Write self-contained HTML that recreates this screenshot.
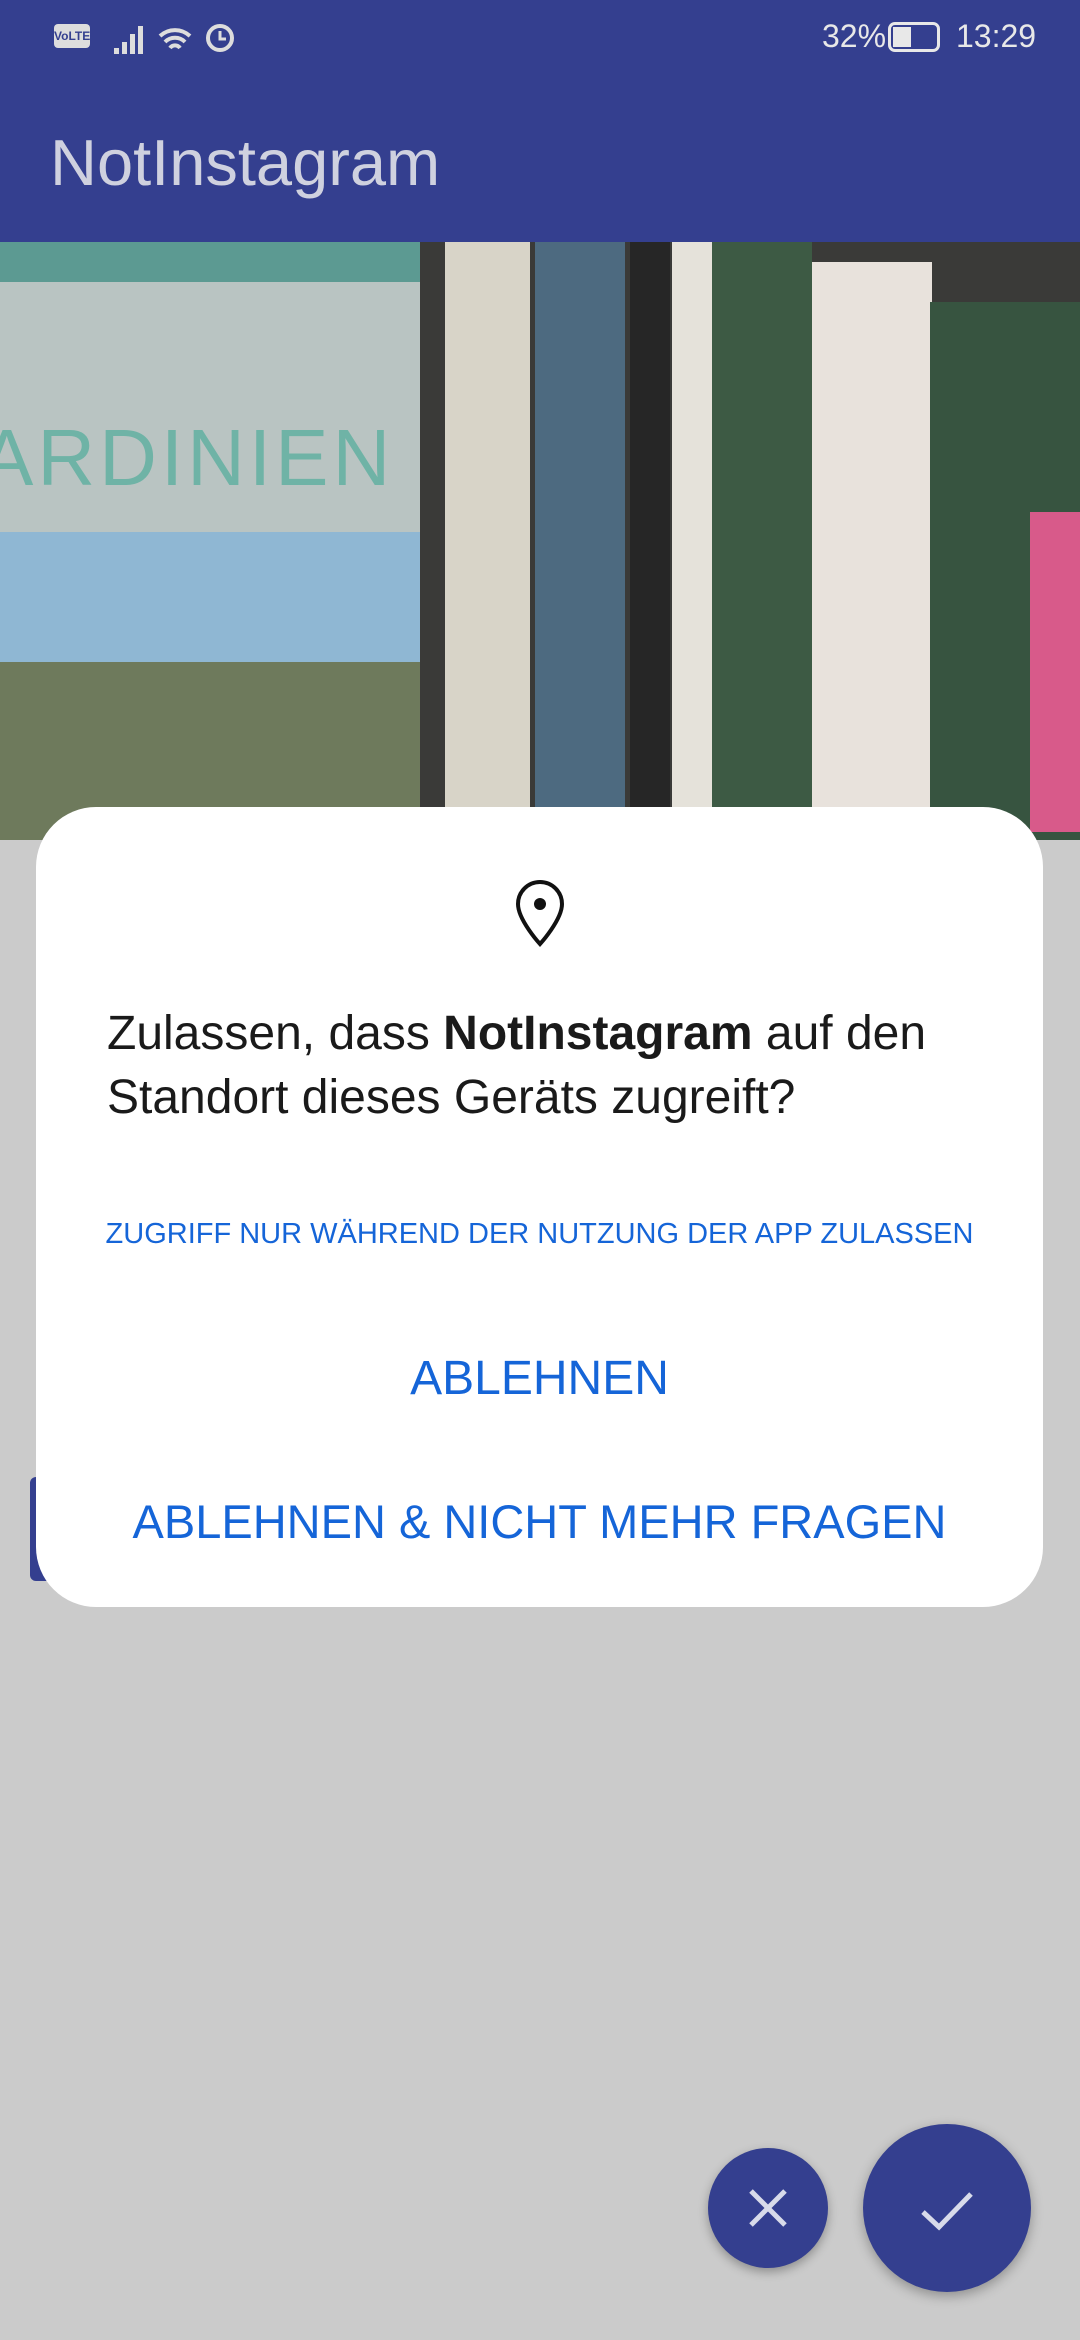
<!DOCTYPE html>
<html><head><meta charset="utf-8"><style>
*{margin:0;padding:0;box-sizing:border-box}
body{width:1080px;height:2340px;background:#cbcbcb;position:relative;overflow:hidden;font-family:"Liberation Sans",sans-serif}
.abs{position:absolute}
</style></head><body>
<div class="abs" style="left:0;top:0;width:1080px;height:242px;background:#343f8f"></div>
<div class="abs" style="left:54px;top:24px;width:36px;height:24px;border-radius:4px;background:#ddd;color:#343f8f;font-size:12px;font-weight:bold;text-align:center;line-height:24px">VoLTE</div>
<svg class="abs" style="left:112px;top:18px" width="130" height="40"><g fill="#ddd"><rect x="2" y="30" width="5" height="6"/><rect x="10" y="24" width="5" height="12"/><rect x="18" y="16" width="5" height="20"/><rect x="26" y="8" width="5" height="28"/></g><path d="M48 18a22 22 0 0 1 30 0M53 24a14 14 0 0 1 20 0M58 30a6 6 0 0 1 10 0" stroke="#ddd" stroke-width="4" fill="none"/><circle cx="108" cy="20" r="12" stroke="#ddd" stroke-width="4" fill="none"/><path d="M108 13v8h6" stroke="#ddd" stroke-width="3" fill="none"/></svg>
<div class="abs" style="left:822px;top:18px;color:#e8e8e8;font-size:32px">32%</div>
<div class="abs" style="left:888px;top:22px;width:52px;height:30px;border:3px solid #e8e8e8;border-radius:7px"><div style="width:18px;height:20px;background:#e8e8e8;margin:2px"></div></div>
<div class="abs" style="left:956px;top:18px;color:#e8e8e8;font-size:32px">13:29</div>
<div class="abs" style="left:50px;top:126px;color:#cfd1df;font-size:65px;line-height:74px">NotInstagram</div>
<div class="abs" style="left:0;top:242px;width:1080px;height:598px;background:#3a3a38;overflow:hidden">
 <div class="abs" style="left:0;top:0;width:420px;height:598px;background:#b9c4c2"></div>
 <div class="abs" style="left:0;top:0;width:420px;height:40px;background:#5c9a92"></div>
 <div class="abs" style="left:-20px;top:170px;color:#6fb3a6;font-size:80px;letter-spacing:4px">ARDINIEN</div>
 <div class="abs" style="left:0;top:290px;width:420px;height:160px;background:#8fb7d3"></div>
 <div class="abs" style="left:0;top:420px;width:420px;height:178px;background:#6e7a5c"></div>
 <div class="abs" style="left:445px;top:0;width:85px;height:598px;background:#d8d4c8"></div>
 <div class="abs" style="left:535px;top:0;width:90px;height:598px;background:#4d6a80"></div>
 <div class="abs" style="left:630px;top:0;width:40px;height:598px;background:#262626"></div>
 <div class="abs" style="left:672px;top:0;width:40px;height:598px;background:#e5e2da"></div>
 <div class="abs" style="left:712px;top:0;width:100px;height:598px;background:#3d5a44"></div>
 <div class="abs" style="left:812px;top:20px;width:120px;height:578px;background:#e8e2dc"></div>
 <div class="abs" style="left:930px;top:60px;width:150px;height:538px;background:#375440"></div>
 <div class="abs" style="left:1030px;top:270px;width:50px;height:320px;background:#d85a8a"></div>
</div>
<div class="abs" style="left:30px;top:1477px;width:40px;height:104px;background:#343f8f;border-radius:6px"></div>
<div class="abs" style="left:36px;top:807px;width:1007px;height:800px;background:#fff;border-radius:60px"></div>
<svg class="abs" style="left:510px;top:880px" width="60" height="68" viewBox="0 0 60 68"><path d="M30 64C30 64 8 40 8 24A22 22 0 0 1 52 24C52 40 30 64 30 64Z" fill="none" stroke="#111" stroke-width="4"/><circle cx="30" cy="24" r="6" fill="#111"/></svg>
<div class="abs" style="left:107px;top:1002px;width:900px;font-size:48px;line-height:64px;color:#1a1a1a">Zulassen, dass <b>NotInstagram</b> auf den Standort dieses Geräts zugreift?</div>
<div class="abs" style="left:36px;top:1218px;width:1007px;text-align:center;font-size:29px;color:#1565d8">ZUGRIFF NUR WÄHREND DER NUTZUNG DER APP ZULASSEN</div>
<div class="abs" style="left:36px;top:1351px;width:1007px;text-align:center;font-size:48px;color:#1565d8">ABLEHNEN</div>
<div class="abs" style="left:36px;top:1494px;width:1007px;text-align:center;font-size:47px;color:#1565d8">ABLEHNEN &amp; NICHT MEHR FRAGEN</div>
<div class="abs" style="left:708px;top:2148px;width:120px;height:120px;border-radius:50%;background:#343f8f;box-shadow:0 4px 10px rgba(0,0,0,.3)"></div>
<svg class="abs" style="left:743px;top:2183px" width="50" height="50"><path d="M8 8L42 42M42 8L8 42" stroke="#d8dbea" stroke-width="5"/></svg>
<div class="abs" style="left:863px;top:2124px;width:168px;height:168px;border-radius:50%;background:#343f8f;box-shadow:0 4px 12px rgba(0,0,0,.3)"></div>
<svg class="abs" style="left:917px;top:2180px" width="60" height="60"><path d="M6 32L22 47L54 14" fill="none" stroke="#d8dbea" stroke-width="5"/></svg>
</body></html>
